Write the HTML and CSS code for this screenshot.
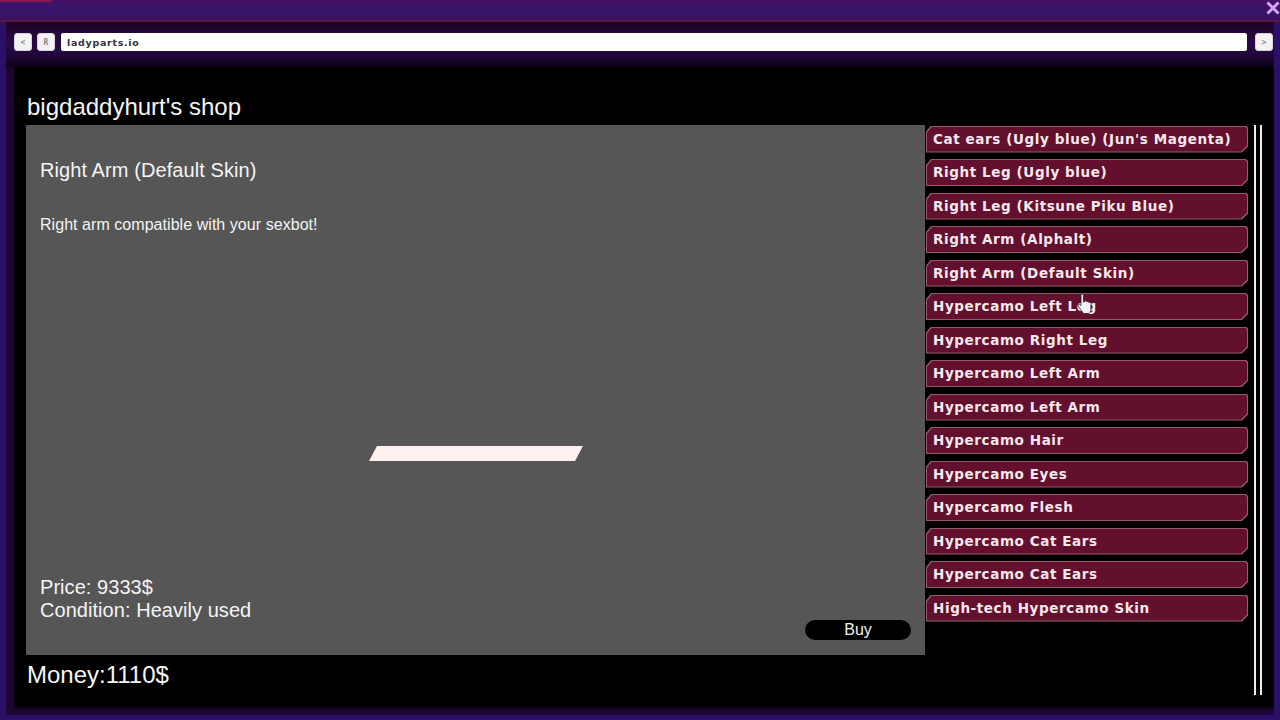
FILE: index.html
```html
<!DOCTYPE html>
<html lang="en">
<head>
<meta charset="utf-8">
<title>bigdaddyhurt's shop</title>
<link rel="stylesheet" href="styles.css">
</head>
<body>
<div class="window">
  <div class="titlebar">
    <span class="title-accent"></span>
    <svg class="close" viewBox="0 0 14 14" width="14" height="14"><path d="M1.5 1.5 12.5 12.5M12.5 1.5 1.5 12.5" stroke="#d9a6f2" stroke-width="3" fill="none"/></svg>
  </div>
  <div class="toolbar">
    <button class="nav">&lt;</button>
    <button class="nav">R</button>
    <div class="url">ladyparts.io</div>
    <button class="nav">&gt;</button>
  </div>
  <div class="page">
    <h1 class="shop-title">bigdaddyhurt's shop</h1>
    <div class="shop">
      <div class="col">
        <section class="panel">
          <h2 class="item-name">Right Arm (Default Skin)</h2>
          <p class="item-desc">Right arm compatible with your sexbot!</p>
          <div class="preview"><div class="bar"></div></div>
          <div class="panel-foot">
            <div class="facts">
              <div>Price: 9333$</div>
              <div>Condition: Heavily used</div>
            </div>
            <button class="buy">Buy</button>
          </div>
        </section>
        <div class="money">Money:1110$</div>
      </div>
      <ul class="list">
        <li class="entry"><span>Cat ears (Ugly blue) (Jun's Magenta)</span></li>
        <li class="entry"><span>Right Leg (Ugly blue)</span></li>
        <li class="entry"><span>Right Leg (Kitsune Piku Blue)</span></li>
        <li class="entry"><span>Right Arm (Alphalt)</span></li>
        <li class="entry"><span>Right Arm (Default Skin)</span></li>
        <li class="entry"><span>Hypercamo Left Leg</span></li>
        <li class="entry"><span>Hypercamo Right Leg</span></li>
        <li class="entry"><span>Hypercamo Left Arm</span></li>
        <li class="entry"><span>Hypercamo Left Arm</span></li>
        <li class="entry"><span>Hypercamo Hair</span></li>
        <li class="entry"><span>Hypercamo Eyes</span></li>
        <li class="entry"><span>Hypercamo Flesh</span></li>
        <li class="entry"><span>Hypercamo Cat Ears</span></li>
        <li class="entry"><span>Hypercamo Cat Ears</span></li>
        <li class="entry"><span>High-tech Hypercamo Skin</span></li>
      </ul>
      <div class="scroll"></div>
    </div>
  </div>
</div>
<svg class="cursor" viewBox="0 0 16 22" width="16" height="22"><path d="M4 1.5c1-1 2.500-.5 2.500 1V9l1-.3V8c1-.6 2 0 2.200.7 1-.5 2 0 2.200.8 1-.4 2 .2 2 1.200V16c0 2-1 3.500-2 4.500H6.500C5 18.500 3 15.500 1 13c-.6-1 .5-2.200 1.700-1.500L4 12.500Z" fill="#f4f2f6" stroke="#2a1a2a" stroke-width=".8"/></svg>
</body>
</html>
```
FILE: styles.css
```css
* { box-sizing: border-box; }
html, body { margin: 0; height: 100%; }
body { width: 1280px; height: 720px; overflow: hidden; background: #000; font-family: "Liberation Sans", Arial, sans-serif; color: #f4f4f4; position: relative; }
.window { width: 1280px; height: 720px; display: flex; flex-direction: column; background: #2a1068; padding-bottom: 5px; overflow: hidden; }
.titlebar { height: 22px; flex: none; display: flex; justify-content: flex-end; align-items: center; position: relative; z-index: 1;
  background: linear-gradient(#451266, #34146a 70%, #3a1260); border-bottom: 2px solid #641044; }
.title-accent { position: absolute; left: 0; top: 0; width: 52px; height: 2px; background: #8a1850; }
.close { margin-top: -4px; }
.toolbar { flex: none; height: 45px; margin: 0 6px; padding: 11px 1px 16px 8px; display: flex; gap: 5px; align-items: center; position: relative; z-index: 1;
  background: linear-gradient(#1c0424, #2a0a48 45%, #1e0636 80%, #0c0214); }
.nav { width: 18px; height: 18px; flex: none; padding: 0; border: 1px solid #d8d4dc; border-radius: 3px; background: #f4f2f4; color: #888; font: bold 8px "DejaVu Sans Mono", monospace; }
.url { flex: 1; height: 18px; margin: 0 3px 0 1px; background: #fff; border-radius: 2px; color: #333; font: bold 9.500px/19px "DejaVu Sans", sans-serif; padding-left: 6px; letter-spacing: .7px; }
.page { flex: 1; min-height: 0; margin: 0 6px 0 14px; padding: 0 0 0 12px; background: #000; box-shadow: -8px 0 0 #1e0630, 0 0 0 0 #000, inset 0 -9px 4px -2px #1e0636; display: flex; flex-direction: column; }
.shop-title { margin: 27px 0 5px 1px; font-size: 24px; line-height: 26px; font-weight: 400; color: #f6f6f6; }
.shop { display: flex; align-items: flex-start; }
.col { width: 899px; flex: none; }
.panel { height: 530px; background: #565656; padding: 34px 14px 0; display: flex; flex-direction: column; }
.item-name { margin: 0; font-size: 20px; line-height: 23px; font-weight: 400; letter-spacing: .08px; }
.item-desc { margin: 33px 0 0; font-size: 16px; line-height: 20px; letter-spacing: .05px; }
.preview { flex: 1; position: relative; }
.bar { position: absolute; left: 329px; top: 211px; width: 214px; height: 15px; background: #fdf0ef; clip-path: polygon(8px 0, 100% 0, calc(100% - 8px) 100%, 0 100%); }
.panel-foot { height: 79px; display: flex; justify-content: space-between; align-items: flex-start; }
.facts { font-size: 20px; line-height: 23px; letter-spacing: .05px; }
.buy { width: 106px; height: 20px; margin: 44px 0 0; padding: 0; border: 0; border-radius: 10px; background: #000; color: #f0f0f0; font: 16px/20px "Liberation Sans", Arial, sans-serif; }
.money { margin: 6px 0 0 1px; font-size: 24px; line-height: 28px; color: #f6f6f6; }
.list { list-style: none; margin: .5px 0 0 1px; padding: 0; width: 322px; flex: none; display: flex; flex-direction: column; gap: 6.500px; }
.entry { height: 27px; background: #96596c; clip-path: polygon(5px 0, calc(100% - 2px) 0, 100% 2px, 100% calc(100% - 6px), calc(100% - 6px) 100%, 0 100%, 0 6px); position: relative; }
.entry span { display: block; position: absolute; inset: 1px; background: #63102f; clip-path: inherit; padding-left: 6px; font: bold 13.500px/25px "DejaVu Sans", sans-serif; letter-spacing: .6px; color: #f7e8ec; white-space: nowrap; }
.scroll { width: 8px; height: 570px; margin-left: 6px; border: solid #ededed; border-width: 0 2px; flex: none; }
.cursor { position: absolute; left: 1077px; top: 293px; }
```
